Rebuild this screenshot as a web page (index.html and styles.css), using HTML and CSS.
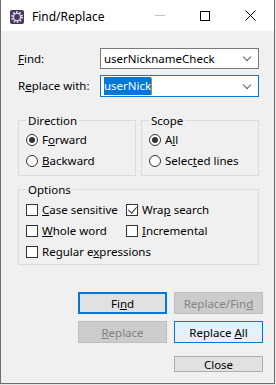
FILE: index.html
```html
<!DOCTYPE html>
<html lang="en">
<head>
    <meta charset="UTF-8">
    <title>Find/Replace</title>
    <link rel="stylesheet" href="styles.css">
</head>
<body>
    <div class="window">
        <!-- Title bar -->
        <div class="titlebar">
            <svg class="app-icon" width="14" height="14" viewBox="0 0 14 14">
                <rect x="0" y="0" width="14" height="14" rx="2" fill="#45355f"/>
                <circle cx="7" cy="7" r="5" fill="none" stroke="#d8d8e0" stroke-width="2" stroke-dasharray="1.6 1.54"/>
                <circle cx="7" cy="7" r="3.6" fill="none" stroke="#d8d8e0" stroke-width="1.4"/>
            </svg>
            <span class="title">Find/Replace</span>
            <div class="controls">
                <span class="ctl ctl-min"></span>
                <span class="ctl ctl-max"></span>
                <svg class="ctl ctl-close" width="11" height="11" viewBox="0 0 11 11">
                    <path d="M0.5 0.5 L10.5 10.5 M10.5 0.5 L0.5 10.5" stroke="#000" stroke-width="1"/>
                </svg>
            </div>
        </div>

        <div class="client">
            <div class="field-row">
                <label class="field-label"><u>F</u>ind:</label>
                <div class="combo">
                    <span class="combo-text">userNicknameCheck</span>
                    <span class="chevron"></span>
                </div>
            </div>
            <div class="field-row second">
                <label class="field-label">R<u>e</u>place with:</label>
                <div class="combo focused">
                    <span class="combo-text"><span class="selected">userNick</span><span class="caret"></span></span>
                    <span class="chevron"></span>
                </div>
            </div>

            <div class="groups">
                <fieldset class="group">
                    <legend>Direction</legend>
                    <div class="opt"><span class="radio on"></span><span>F<u>o</u>rward</span></div>
                    <div class="opt"><span class="radio"></span><span><u>B</u>ackward</span></div>
                </fieldset>
                <fieldset class="group">
                    <legend>Scope</legend>
                    <div class="opt"><span class="radio on"></span><span>A<u>l</u>l</span></div>
                    <div class="opt"><span class="radio"></span><span>Selec<u>t</u>ed lines</span></div>
                </fieldset>
            </div>

            <fieldset class="group options">
                <legend>Options</legend>
                <div class="opt"><span class="check"></span><span><u>C</u>ase sensitive</span></div>
                <div class="opt"><span class="check on"></span><span>Wra<u>p</u> search</span></div>
                <div class="opt"><span class="check"></span><span><u>W</u>hole word</span></div>
                <div class="opt"><span class="check"></span><span><u>I</u>ncremental</span></div>
                <div class="opt wide"><span class="check"></span><span>Regular e<u>x</u>pressions</span></div>
            </fieldset>

            <div class="buttons">
                <button class="btn default">Fi<u>n</u>d</button>
                <button class="btn" disabled>Replace/Fin<u>d</u></button>
                <button class="btn" disabled><u>R</u>eplace</button>
                <button class="btn hot">Replace <u>A</u>ll</button>
                <button class="btn close">Close</button>
            </div>
        </div>
    </div>
</body>
</html>
```

FILE: styles.css
```css
* {
    margin: 0;
    padding: 0;
    box-sizing: border-box;
}

body {
    background: #e6e6e6;
    font-family: "Noto Sans", "Noto Sans CJK KR", sans-serif;
    font-size: 11.5px;
    color: #000;
}

.window {
    width: 275px;
    height: 384px;
    background: #f0f0f0;
    border: 1px solid #6e6e6e;
    border-top: none;
}

/* Title bar */
.titlebar {
    height: 31px;
    background: #fff;
    display: flex;
    align-items: center;
    padding-left: 9px;
}

.app-icon {
    margin-right: 8px;
    margin-top: 2px;
}

.title {
    font-size: 12px;
    line-height: 16px;
    margin-top: 2px;
}

.controls {
    margin-left: auto;
    display: flex;
    align-items: center;
    height: 100%;
}

.ctl {
    display: block;
}

.ctl-min {
    width: 10px;
    height: 1px;
    background: #c4c4c4;
    margin-right: 35px;
}

.ctl-max {
    width: 10px;
    height: 10px;
    border: 1px solid #000;
    margin-right: 35px;
}

.ctl-close {
    margin-right: 18px;
}

/* Client */
.client {
    padding: 17px 15px 0 17px;
}

.field-row {
    display: flex;
    align-items: center;
    height: 21px;
}

.field-row.second {
    margin-top: 6px;
    height: 22px;
}

.field-label {
    width: 82px;
    line-height: 16px;
}

.combo {
    width: 159px;
    height: 100%;
    background: #fff;
    border: 1px solid #7a7a7a;
    display: flex;
    align-items: center;
    padding-left: 3px;
}

.combo.focused {
    border-color: #0078d7;
}

.combo-text {
    flex: 1;
    line-height: 18px;
    display: flex;
    align-items: center;
}

.selected {
    background: #0078d7;
    color: #fff;
    line-height: 18px;
}

.caret {
    display: inline-block;
    width: 1px;
    height: 17px;
    background: #e07a10;
}

.chevron {
    width: 6px;
    height: 6px;
    border-right: 1px solid #606060;
    border-bottom: 1px solid #606060;
    transform: rotate(45deg);
    margin: 0 8px 3px 0;
}

/* Group boxes */
.groups {
    display: flex;
    gap: 5px;
    margin-top: 16px;
    width: 241px;
}

.group {
    flex: 1;
    border: 1px solid #dcdcdc;
    padding: 1px 4px 4px 7px;
    min-width: 0;
}

.group legend {
    padding: 0 2px;
    line-height: 15px;
}

.opt {
    display: flex;
    align-items: center;
    height: 21px;
    white-space: nowrap;
}

.radio {
    width: 12px;
    height: 12px;
    border: 1px solid #333;
    border-radius: 50%;
    background: #fff;
    margin-right: 4px;
    display: flex;
    align-items: center;
    justify-content: center;
}

.radio.on::after {
    content: "";
    width: 6px;
    height: 6px;
    border-radius: 50%;
    background: #333;
}

.options {
    margin-top: 6px;
    width: 241px;
    display: grid;
    grid-template-columns: 100px 1fr;
    padding: 2px 4px 2px 7px;
}

.options .wide {
    grid-column: 1 / 3;
}

.check {
    width: 12px;
    height: 12px;
    border: 1px solid #333;
    background: #fff;
    margin-right: 4px;
    position: relative;
}

.check.on::after {
    content: "";
    position: absolute;
    left: 3px;
    top: 0px;
    width: 4px;
    height: 7px;
    border-right: 1px solid #333;
    border-bottom: 1px solid #333;
    transform: rotate(40deg);
}

/* Buttons */
.buttons {
    display: grid;
    grid-template-columns: 89px 89px;
    grid-template-rows: 22px 22px 22px;
    column-gap: 7px;
    row-gap: 7px;
    margin: 27px 0 0 60px;
}

.btn {
    font-family: inherit;
    font-size: 11.5px;
    background: #e1e1e1;
    border: 1px solid #adadad;
    color: #000;
}

.btn.default {
    border: 2px solid #0078d7;
}

.btn.hot {
    background: #e5f1fb;
    border-color: #0078d7;
}

.btn:disabled {
    background: #cccccc;
    border-color: #bfbfbf;
    color: #838383;
}

.btn.close {
    grid-column: 2;
    margin-top: 6px;
}
```
